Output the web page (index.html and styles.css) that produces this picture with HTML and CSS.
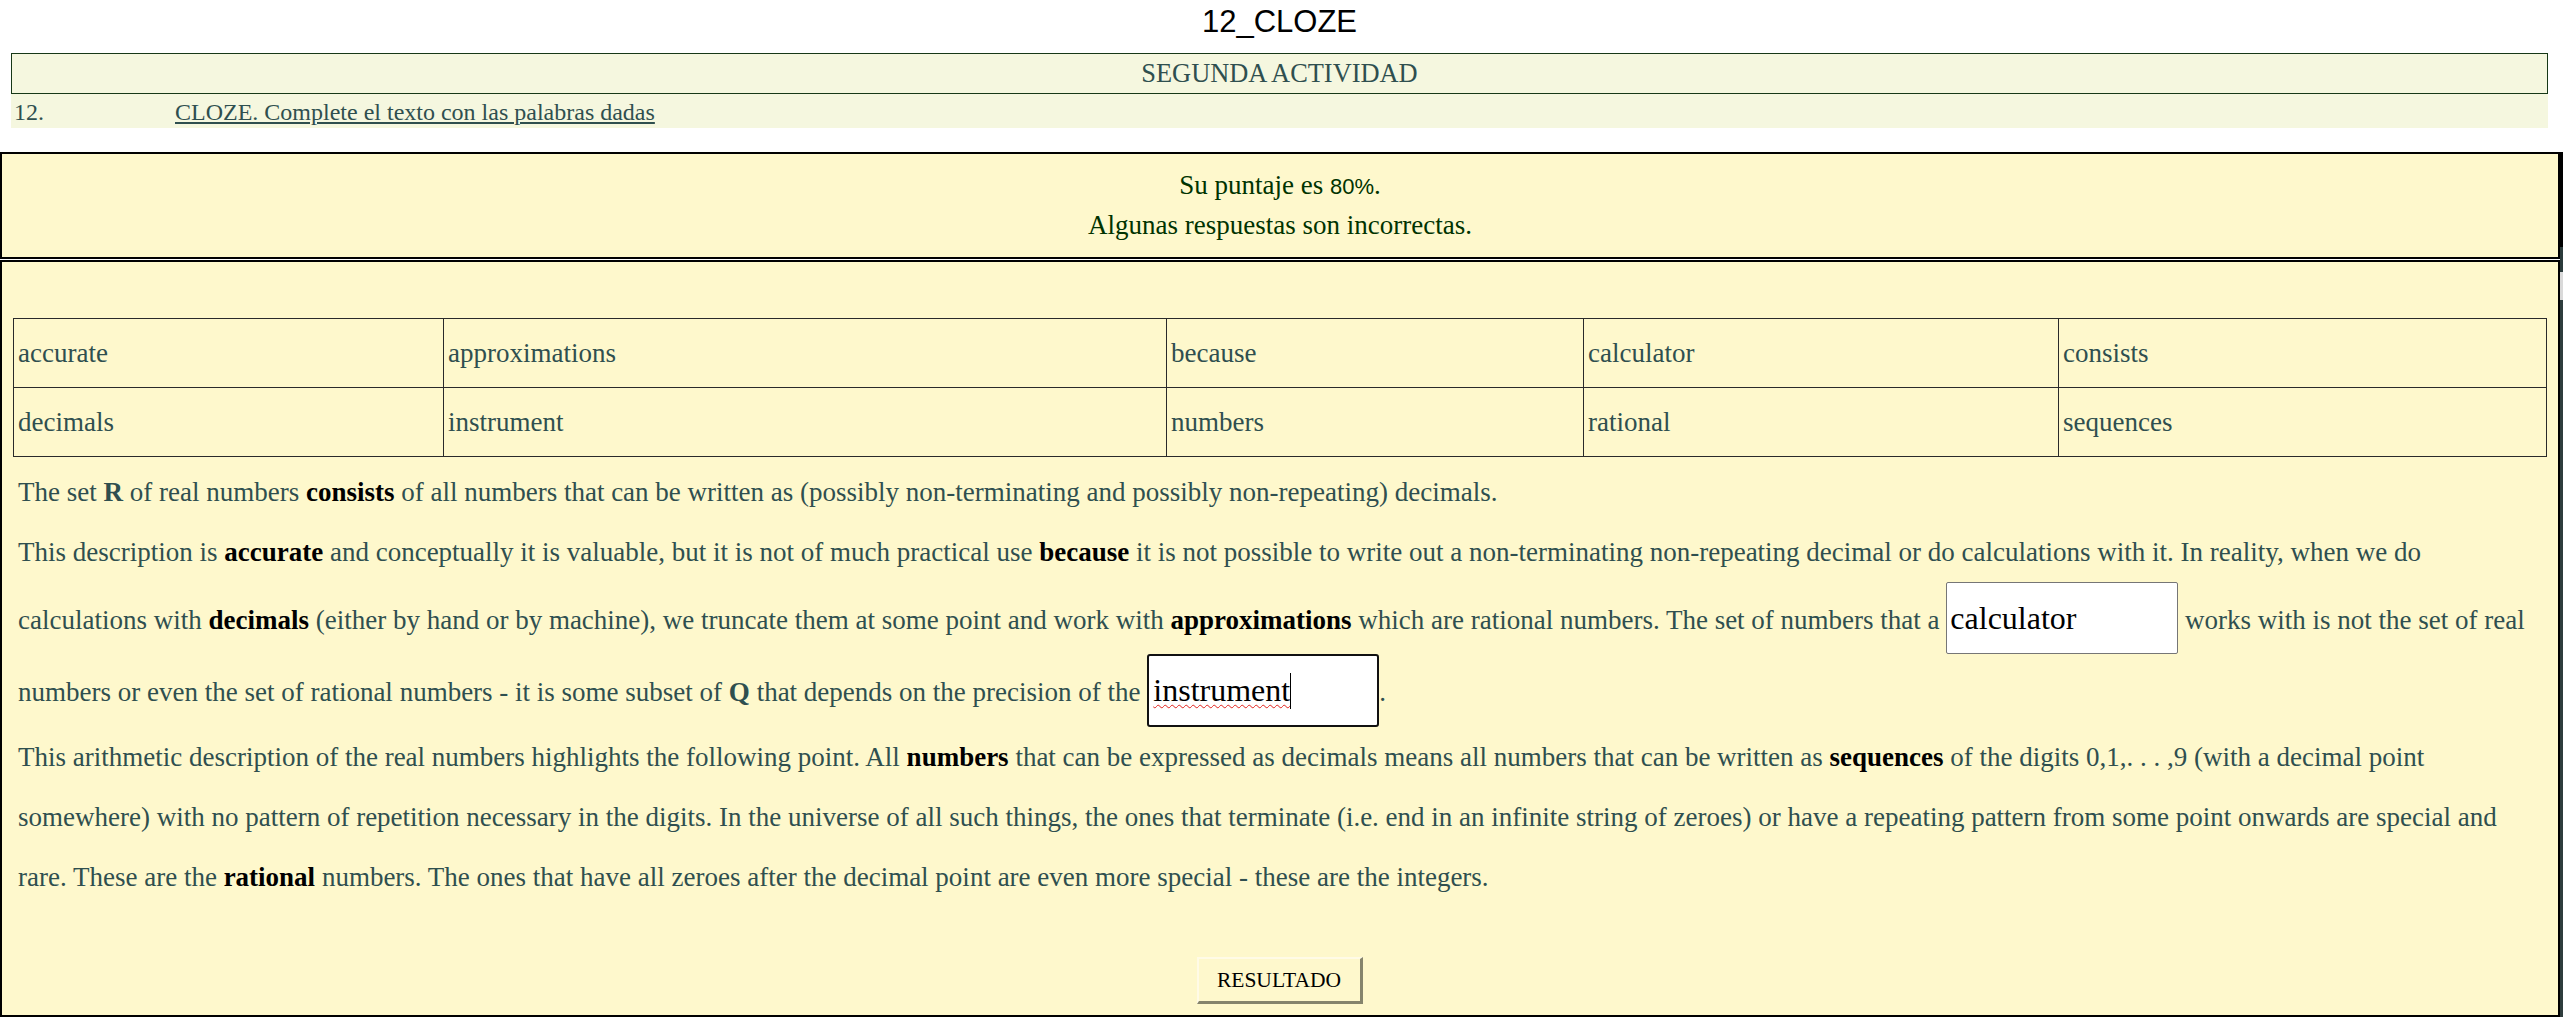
FILE: index.html
```html
<!DOCTYPE html>
<html lang="es">
<head>
<meta charset="utf-8">
<title>12_CLOZE</title>
<link rel="stylesheet" href="styles.css">
</head>
<body>
<header class="page-head">
  <div class="doc-title">12_CLOZE</div>
  <div class="activity">SEGUNDA ACTIVIDAD</div>
  <div class="item-row"><span class="item-num">12.</span><a class="item-link" href="#">CLOZE. Complete el texto con las palabras dadas</a></div>
</header>
<div class="exercise">
  <div class="boxes">
    <div class="feedback">
      <div>Su puntaje es <span class="pct">80%</span>.</div>
      <div>Algunas respuestas son incorrectas.</div>
    </div>
    <div class="main">
      <table class="bank">
        <colgroup>
          <col class="c1"><col class="c2"><col class="c3"><col class="c4"><col class="c5">
        </colgroup>
        <tr><td>accurate</td><td>approximations</td><td>because</td><td>calculator</td><td>consists</td></tr>
        <tr><td>decimals</td><td>instrument</td><td>numbers</td><td>rational</td><td>sequences</td></tr>
      </table>
      <div class="cloze">
        <p>The set <b class="set">R</b> of real numbers <b class="key">consists</b> of all numbers that can be written as (possibly non-terminating and possibly non-repeating) decimals.</p>
        <p>This description is <b class="key">accurate</b> and conceptually it is valuable, but it is not of much practical use <b class="key">because</b> it is not possible to write out a non-terminating non-repeating decimal or do calculations with it. In reality, when we do calculations with <b class="key">decimals</b> (either by hand or by machine), we truncate them at some point and work with <b class="key">approximations</b> which are rational numbers. The set of numbers that a <input class="gap" type="text" value="calculator"> works with is not the set of real numbers or even the set of rational numbers - it is some subset of <b class="set">Q</b> that depends on the precision of the <span class="gap-active"><span class="misspelled">instrument</span><span class="caret"></span></span>.</p>
        <p>This arithmetic description of the real numbers highlights the following point. All <b class="key">numbers</b> that can be expressed as decimals means all numbers that can be written as <b class="key">sequences</b> of the digits 0,1,. . . ,9 (with a decimal point somewhere) with no pattern of repetition necessary in the digits. In the universe of all such things, the ones that terminate (i.e. end in an infinite string of zeroes) or have a repeating pattern from some point onwards are special and rare. These are the <b class="key">rational</b> numbers. The ones that have all zeroes after the decimal point are even more special - these are the integers.</p>
      </div>
      <div class="actions"><button class="btn" type="button">RESULTADO</button></div>
    </div>
  </div>
  <div class="edge"></div>
</div>
</body>
</html>
```

FILE: styles.css
```css
html, body {
  margin: 0;
  background: #ffffff;
}

body {
  font-family: "Liberation Serif", "Times New Roman", serif;
  color: #2f4f4f;
}

.page-head {
  padding: 4px 15px 0 11px;
  margin-bottom: 24px;
}

.doc-title {
  font-family: "Liberation Sans", Arial, sans-serif;
  font-size: 31px;
  line-height: 36px;
  color: #000000;
  text-align: center;
  margin-bottom: 13px;
}

.activity {
  background: #f5f7df;
  border: 1px solid #173817;
  text-align: center;
  font-size: 26.4px;
  line-height: 39px;
}

.item-row {
  background: #f5f7df;
  display: flex;
  height: 34px;
  box-sizing: border-box;
  padding-top: 2px;
  font-size: 24px;
  line-height: 32px;
}

.item-num {
  width: 161px;
  padding-left: 3px;
  flex: none;
}

.item-link {
  color: #2f4f4f;
  text-decoration: underline;
}

.exercise {
  display: flex;
}

.boxes {
  flex: 1;
  min-width: 0;
}

.edge {
  width: 3px;
  flex: none;
  background: linear-gradient(to bottom, #000000 0 95px, #2b3b3b 95px 120px, #d9d9d9 120px 148px, #2f3d3d 148px 100%);
}

.feedback {
  background: #fef8cc;
  border: 2px solid #000000;
  padding: 12px 0;
  text-align: center;
  color: #003300;
  font-size: 27px;
  line-height: 39px;
  margin-bottom: 1px;
}

.pct {
  font-family: "Liberation Sans", Arial, sans-serif;
  font-size: 22px;
}

.main {
  background: #fef8cc;
  border: 2px solid #000000;
  padding: 56px 12px 11px 11px;
}

.bank {
  width: 100%;
  border-collapse: collapse;
  table-layout: fixed;
  font-size: 27px;
  color: #2f4f4f;
}

.bank .c1 { width: 430px; }
.bank .c2 { width: 723px; }
.bank .c3 { width: 417px; }
.bank .c4 { width: 475px; }
.bank .c5 { width: 488px; }

.bank td {
  border: 1px solid #2a2a2a;
  height: 68px;
  padding: 0 4px;
  vertical-align: middle;
  line-height: 31px;
}

.cloze {
  padding: 5px 5px 0;
  font-size: 27px;
  line-height: 60px;
}

.cloze p {
  margin: 0;
}

.cloze .key {
  color: #000000;
}

.cloze .set {
  color: #2f4f4f;
}

.gap {
  font-family: "Liberation Serif", "Times New Roman", serif;
  font-size: 32px;
  width: 232px;
  height: 72px;
  box-sizing: border-box;
  border: 1px solid #767676;
  border-radius: 2px;
  padding: 0 3px;
  margin: 0;
  background: #ffffff;
  color: #000000;
  vertical-align: baseline;
}

.gap-active {
  display: inline-block;
  width: 232px;
  height: 73px;
  box-sizing: border-box;
  border: 2px solid #111111;
  border-radius: 3px;
  padding: 16px 4px 0;
  background: #ffffff;
  color: #000000;
  font-size: 32px;
  line-height: 36px;
  vertical-align: baseline;
}

.misspelled {
  text-decoration: underline wavy #e0201a;
  text-decoration-thickness: 1px;
  text-underline-offset: 3px;
}

.caret {
  display: inline-block;
  width: 1px;
  height: 36px;
  background: #000000;
  vertical-align: -8px;
}

.actions {
  display: flex;
  justify-content: center;
  padding-top: 50px;
}

.btn {
  font-family: "Liberation Serif", "Times New Roman", serif;
  font-size: 21.5px;
  color: #000000;
  background: #fef8cc;
  border-style: solid;
  border-width: 2px 3px 3px 2px;
  border-color: #fffbe6 #85846c #85846c #fffbe6;
  height: 47px;
  width: 166px;
  padding: 0;
  margin: 0;
}
```
